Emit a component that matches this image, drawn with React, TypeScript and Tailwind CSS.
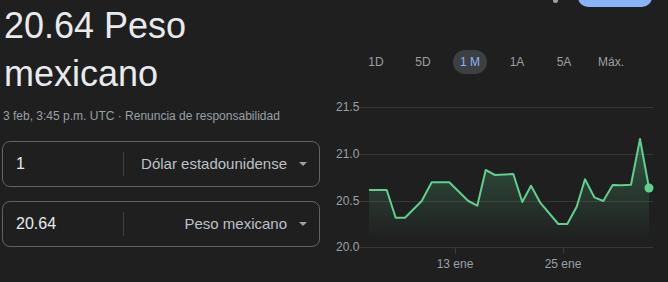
import React from 'react';

const pts: [number, number][] = [
  [369, 190], [386.7, 190], [395.7, 217.7], [405, 217.7], [421.7, 201], [431.7, 182.3],
  [449.3, 182.3], [468.3, 201], [477.3, 205.7], [485.7, 170], [495, 175], [513.3, 174],
  [522.3, 202], [531, 185.7], [540, 202.3], [558.3, 224], [567.3, 224], [576.7, 206.7],
  [585, 179.3], [594.3, 197.3], [603.3, 201], [612.7, 185], [621.7, 185.3], [631, 184.7],
  [640, 139], [649, 188],
];

// chart svg starts at x=330, y=95
const OX = 330;
const OY = 95;

const ranges = ['1D', '5D', '1 M', '1A', '5A', 'Máx.'];

function Chart() {
  const line = pts.map(([x, y], i) => `${i ? 'L' : 'M'}${(x - OX).toFixed(1)} ${(y - OY).toFixed(1)}`).join(' ');
  const area = `${line} L${649 - OX} ${240 - OY} L${369 - OX} ${240 - OY} Z`;
  const grid = [107, 154, 201, 247];
  const labels = ['21.5', '21.0', '20.5', '20.0'];
  return (
    <svg width="338" height="187" viewBox="0 0 338 187" className="block" style={{ fontFamily: '"Liberation Sans", Arial, sans-serif' }}>
      <defs>
        <linearGradient id="fill" x1="0" y1="0" x2="0" y2="1">
          <stop offset="0" stopColor="#5fd08e" stopOpacity="0.32" />
          <stop offset="1" stopColor="#5fd08e" stopOpacity="0" />
        </linearGradient>
      </defs>
      {grid.map((y, i) => (
        <g key={y}>
          <line x1={28} x2={323} y1={y - OY + 0.5} y2={y - OY + 0.5} stroke="#353638" strokeWidth="1" />
          <text x={6} y={y - OY + 4} fill="#9aa0a6" fontSize="12">{labels[i]}</text>
        </g>
      ))}
      <line x1={455 - OX + 0.5} x2={455 - OX + 0.5} y1={247 - OY} y2={254 - OY} stroke="#3a3b3d" />
      <line x1={563 - OX + 0.5} x2={563 - OX + 0.5} y1={247 - OY} y2={254 - OY} stroke="#3a3b3d" />
      <text x={455 - OX} y={268 - OY} fill="#9aa0a6" fontSize="12" textAnchor="middle">13 ene</text>
      <text x={563 - OX} y={268 - OY} fill="#9aa0a6" fontSize="12" textAnchor="middle">25 ene</text>
      <path d={area} fill="url(#fill)" />
      <path d={line} fill="none" stroke="#5fd08e" strokeWidth="2" strokeLinejoin="round" />
      <circle cx={649 - OX} cy={188 - OY} r="4.5" fill="#5fd08e" />
    </svg>
  );
}

function CurrencyRow({ value, currency }: { value: string; currency: string }) {
  return (
    <div className="flex h-[46px] items-center rounded-lg border border-[#5f6368] pl-[13px] pr-[12px]">
      <div className="w-[107px] text-[16px] text-[#e8eaed]">{value}</div>
      <div className="h-[24px] w-px bg-[#3c4043]" />
      <div className="flex flex-1 items-center justify-end text-[15px] text-[#bdc1c6]">
        <span>{currency}</span>
        <svg width="8" height="4" viewBox="0 0 8 4" className="ml-[12px]">
          <path d="M0 0 L8 0 L4 4 Z" fill="#9aa0a6" />
        </svg>
      </div>
    </div>
  );
}

export default function App() {
  return (
    <div
      className="relative h-[282px] w-[668px] overflow-hidden bg-[#1f1f1f] text-[#e8eaed]"
      style={{ fontFamily: '"Liberation Sans", Arial, sans-serif' }}
    >
      <div className="absolute left-[553px] top-[-2px] h-[5px] w-[5px] rounded-full bg-[#9aa0a6]" />
      <div className="absolute left-[578px] top-[-20px] h-[27px] w-[74px] rounded-[10px] bg-[#8ab4f8]" />

      <div className="flex">
        <div className="ml-[2px] w-[318px] shrink-0">
          <div className="pl-[2px] pt-[2px] text-[36px] leading-[48px] text-[#e8eaed]">
            20.64 Peso
            <br />
            mexicano
          </div>
          <div className="mt-[11px] pl-[1px] text-[12px] leading-[14px] text-[#9aa0a6]">
            3 feb, 3:45 p.m. UTC · Renuncia de responsabilidad
          </div>
          <div className="mt-[18px] flex flex-col gap-[14px]">
            <CurrencyRow value="1" currency="Dólar estadounidense" />
            <CurrencyRow value="20.64" currency="Peso mexicano" />
          </div>
        </div>

        <div className="ml-[10px] flex-1">
          <div className="mt-[50px] flex h-[24px] items-center">
            {ranges.map((r, i) => (
              <div
                key={r}
                className={
                  'flex h-[24px] w-[34px] items-center justify-center text-[12px] ' +
                  (r === '1 M' ? 'rounded-full bg-[#3c4043] text-[#8ab4f8]' : 'text-[#9aa0a6]')
                }
                style={{ marginLeft: i === 0 ? 29 : 13 }}
              >
                {r}
              </div>
            ))}
          </div>
          <div className="mt-[21px]">
            <Chart />
          </div>
        </div>
      </div>
    </div>
  );
}
